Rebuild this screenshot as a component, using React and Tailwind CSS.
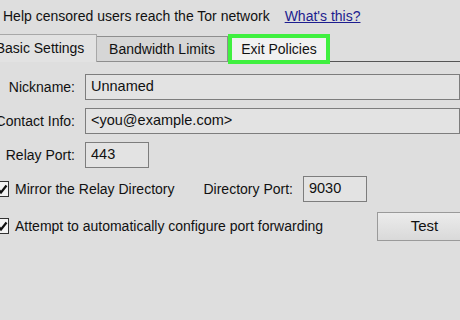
import React from 'react';

const font = { fontFamily: '"Liberation Sans", Arial, sans-serif' };

const Check = () => (
    <span className="flex items-center justify-center w-[14px] h-[16px] border border-[#333] bg-[#f4f4f4] shrink-0">
        <svg width="11" height="11" viewBox="0 0 11 11">
            <path d="M1.5 5.5 L4 8.5 L9.5 1.5" fill="none" stroke="#111" strokeWidth="2.2" />
        </svg>
    </span>
);

const Field = ({ value, className = '' }) => (
    <div className={`h-[26px] border border-[#7d7d7d] bg-[#e3e3e3] flex items-center pl-[5px] text-[14.5px] text-[#111] ${className}`}>
        {value}
    </div>
);

const Label = ({ children }) => (
    <span className="w-[79px] shrink-0 flex justify-end whitespace-nowrap text-[14px]">{children}</span>
);

const App = () => {
    return (
        <div className="w-[460px] h-[320px] bg-[#dedede] overflow-hidden text-[#111]" style={font}>
            <div className="flex items-center h-[33px] pl-[3px] text-[14px] whitespace-nowrap">
                <span>Help censored users reach the Tor network</span>
                <span className="ml-[15px] text-[#1d1d8f] underline">What's this?</span>
            </div>

            <div className="flex items-end h-[29px] -ml-[16px] whitespace-nowrap">
                <div className="w-[113px] h-[28px] border-t border-r border-[#a8a8a8] bg-[#e2e2e2] flex items-center justify-center text-[14px]">
                    Basic Settings
                </div>
                <div className="w-[131px] h-[26px] border border-l-0 border-[#8e8e8e] bg-[#d6d6d6] flex items-center justify-center text-[14px]">
                    Bandwidth Limits
                </div>
                <div className="w-[102px] h-[30px] -mb-[2px] border-[4px] border-[#3ff03f] bg-[#f1f1f1] flex items-center justify-center text-[14px]">
                    Exit Policies
                </div>
                <div className="flex-1 h-px bg-[#555]" />
            </div>

            <div className="flex flex-col gap-[8px] pt-[12px] -ml-[4px]">
                <div className="flex items-center">
                    <Label>Nickname:</Label>
                    <Field value="Unnamed" className="ml-[10px] flex-1" />
                </div>
                <div className="flex items-center">
                    <Label>Contact Info:</Label>
                    <Field value="<you@example.com>" className="ml-[10px] flex-1" />
                </div>
                <div className="flex items-center">
                    <Label>Relay Port:</Label>
                    <Field value="443" className="ml-[10px] w-[64px]" />
                </div>
            </div>

            <div className="flex items-center mt-[8px] -ml-[5px] h-[26px] whitespace-nowrap">
                <Check />
                <span className="ml-[6px] text-[14px]">Mirror the Relay Directory</span>
                <span className="ml-[29px] text-[14px]">Directory Port:</span>
                <Field value="9030" className="ml-[10px] w-[64px]" />
            </div>

            <div className="flex items-center mt-[9px] -ml-[5px] h-[30px] whitespace-nowrap">
                <Check />
                <span className="ml-[6px] text-[14px]">Attempt to automatically configure port forwarding</span>
                <div className="ml-auto -mr-[12px] w-[95px] h-[29px] border border-[#9a9a9a] bg-gradient-to-b from-[#ececec] to-[#d9d9d9] flex items-center justify-center text-[15px]">
                    Test
                </div>
            </div>
        </div>
    );
};

export default App;
